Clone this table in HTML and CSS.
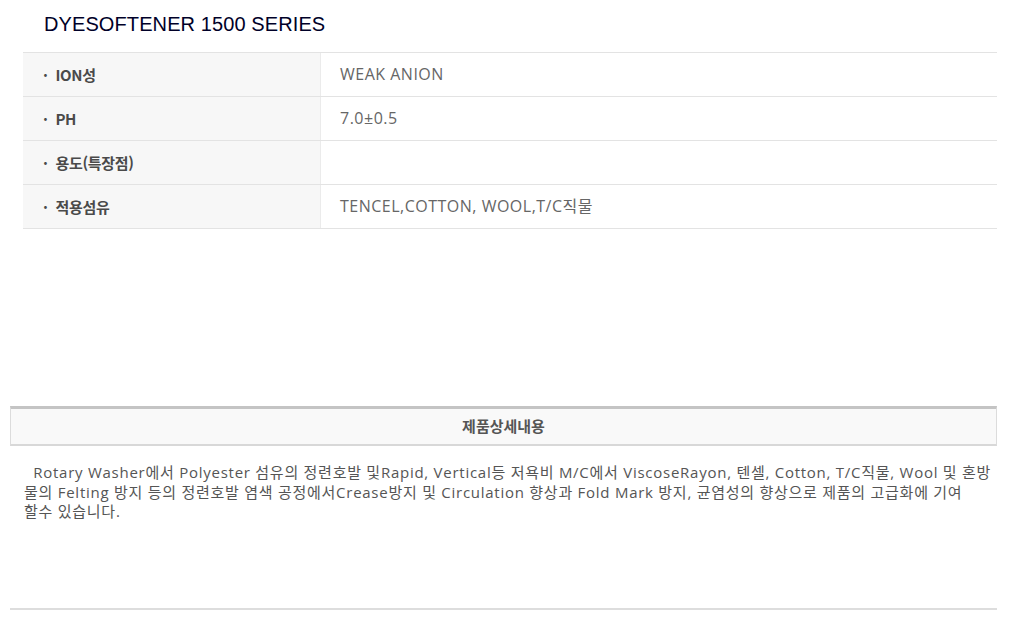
FILE: index.html
```html
<!DOCTYPE html>
<html lang="ko">
<head>
<meta charset="utf-8">
<link rel="stylesheet" href="styles.css">
</head>
<body>
<div class="page">
  <h1 class="title">DYESOFTENER 1500 SERIES</h1>
  <div class="spec">
    <div class="row"><div class="label">·&nbsp; ION성</div><div class="value">WEAK ANION</div></div>
    <div class="row"><div class="label">·&nbsp; PH</div><div class="value">7.0±0.5</div></div>
    <div class="row"><div class="label">·&nbsp; 용도(특장점)</div><div class="value"></div></div>
    <div class="row"><div class="label">·&nbsp; 적용섬유</div><div class="value">TENCEL,COTTON, WOOL,T/C직물</div></div>
  </div>
  <div class="detail">
    <div class="detail-head">제품상세내용</div>
    <p class="detail-body">&nbsp; Rotary Washer에서 Polyester 섬유의 정련호발 및Rapid, Vertical등 저욕비 M/C에서 ViscoseRayon, 텐셀, Cotton, T/C직물, Wool 및 혼방물의 Felting 방지 등의 정련호발 염색 공정에서Crease방지 및 Circulation 향상과 Fold Mark 방지, 균염성의 향상으로 제품의 고급화에 기여<br>할수 있습니다.</p>
  </div>
  <div class="end-line"></div>
</div>
</body>
</html>
```

FILE: styles.css
```css
html, body {
  margin: 0;
  padding: 0;
  background: #fff;
}
.page {
  width: 987px;
  padding: 0 0 0 10px;
  font-family: "Open Sans", "Noto Sans CJK KR", sans-serif;
}
.title {
  margin: 0;
  padding: 11px 0 0 34px;
  height: 40px;
  box-sizing: border-box;
  font-family: "Liberation Sans", Arial, sans-serif;
  font-weight: normal;
  font-size: 20px;
  line-height: 26px;
  color: #000028;
  letter-spacing: 0.1px;
}
.spec {
  margin: 12px 0 0 13px;
  border-top: 1px solid #e3e3e3;
}
.row {
  display: flex;
  height: 44px;
  border-bottom: 1px solid #e3e3e3;
  box-sizing: border-box;
}
.label {
  width: 298px;
  background: #f7f7f7;
  border-right: 1px solid #ebebeb;
  box-sizing: border-box;
  padding-left: 20px;
  font-family: "Noto Sans CJK KR", sans-serif;
  font-size: 15px;
  font-weight: bold;
  color: #4a4a4a;
  line-height: 43px;
  letter-spacing: -0.3px;
}
.value {
  flex: 1;
  padding-left: 19px;
  font-size: 16px;
  letter-spacing: 0.5px;
  color: #666;
  line-height: 43px;
}
.detail {
  margin-top: 177px;
}
.detail-head {
  height: 35px;
  background: #f9f9f9;
  border-top: 3px solid #c4c4c4;
  border-left: 1px solid #dcdcdc;
  border-right: 1px solid #dcdcdc;
  border-bottom: 2px solid #d8d8d8;
  text-align: center;
  font-family: "Noto Sans CJK KR", sans-serif;
  font-size: 15px;
  font-weight: bold;
  color: #555;
  line-height: 34px;
}
.detail-body {
  margin: 17px 0 0 0;
  padding: 0 0 0 14px;
  font-size: 15px;
  letter-spacing: 0.74px;
  line-height: 19.5px;
  color: #555;
}
.end-line {
  margin-top: 86px;
  height: 2px;
  background: #dddddd;
}
```
